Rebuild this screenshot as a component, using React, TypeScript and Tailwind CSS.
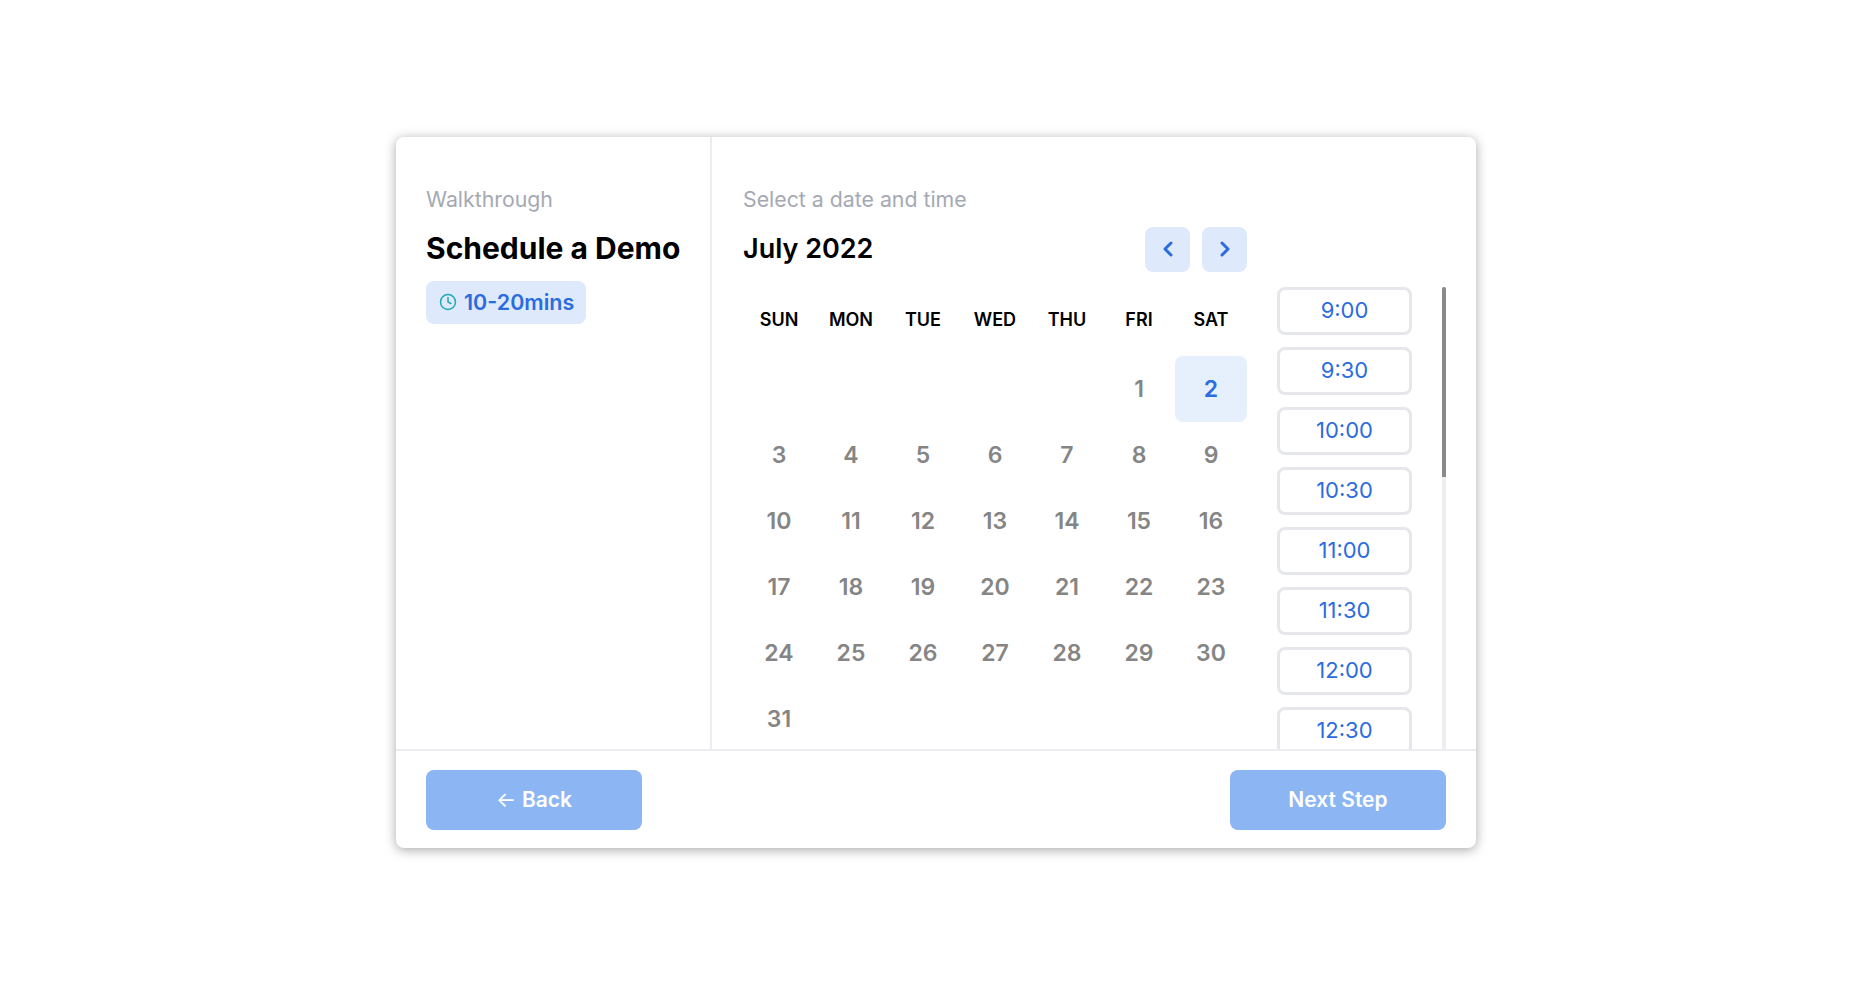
import React from 'react';
import { ChevronLeft, ChevronRight, Clock } from 'lucide-react';

const weekDays = ['SUN', 'MON', 'TUE', 'WED', 'THU', 'FRI', 'SAT'];
const leadingBlanks = 5;
const dayCount = 31;
const selectedDay = 2;

const times = [
    '9:00', '9:30', '10:00', '10:30', '11:00', '11:30', '12:00', '12:30', '13:00', '13:30',
    '14:00', '14:30', '15:00', '15:30', '16:00', '16:30', '17:00', '17:30', '18:00',
];

const App: React.FC = () => {
    const days = Array.from({ length: dayCount }, (_, i) => i + 1);

    return (
        <div className="min-h-screen flex items-center justify-center bg-white font-['Inter',sans-serif]">
            <div className="w-[1080px] h-[711px] flex flex-col bg-white rounded-lg shadow-[0_2px_12px_rgba(0,0,0,0.35)] overflow-hidden">
                <div className="flex-1 flex min-h-0">
                    <div className="w-[316px] shrink-0 border-r-2 border-[#ebedf0] pl-[30px] pt-[47px]">
                        <p className="text-[21.3px] leading-[30px] text-[#a5a9b4]">Walkthrough</p>
                        <h1 className="mt-[15px] text-[30px] leading-[38px] font-bold text-black">Schedule a Demo</h1>
                        <div className="mt-[14px] inline-flex items-center gap-[7px] h-[43px] pl-[13px] pr-[12px] rounded-lg bg-[#dee9fb]">
                            <Clock className="w-[18px] h-[18px] text-[#1fa8b8]" strokeWidth={2} />
                            <span className="text-[21.5px] font-semibold text-[#2b6cdf]">10-20mins</span>
                        </div>
                    </div>

                    <div className="flex-1 flex min-w-0 pl-[31px] pr-[30px] pt-[47px]">
                        <div className="w-[504px] shrink-0">
                            <p className="text-[21.3px] leading-[30px] text-[#a5a9b4]">Select a date and time</p>
                            <div className="mt-[13px] flex items-center justify-between h-[45px]">
                                <h2 className="text-[27px] font-semibold text-black">July 2022</h2>
                                <div className="flex gap-[12px]">
                                    <button className="w-[45px] h-[45px] flex items-center justify-center rounded-lg bg-[#dee9fb]">
                                        <ChevronLeft className="w-6 h-6 text-[#2b6cdf]" strokeWidth={3} />
                                    </button>
                                    <button className="w-[45px] h-[45px] flex items-center justify-center rounded-lg bg-[#dee9fb]">
                                        <ChevronRight className="w-6 h-6 text-[#2b6cdf]" strokeWidth={3} />
                                    </button>
                                </div>
                            </div>
                            <div className="mt-[24px] grid grid-cols-7">
                                {weekDays.map((d) => (
                                    <div key={d} className="h-[48px] flex items-center justify-center text-[18px] font-semibold text-black">
                                        {d}
                                    </div>
                                ))}
                            </div>
                            <div className="mt-[12px] grid grid-cols-7 auto-rows-[66px]">
                                {Array.from({ length: leadingBlanks }, (_, i) => (
                                    <div key={i} />
                                ))}
                                {days.map((d) => (
                                    <div
                                        key={d}
                                        className={
                                            d === selectedDay
                                                ? 'flex items-center justify-center pt-px rounded-lg bg-[#e6effc] text-[23px] font-semibold text-[#2b6cdf]'
                                                : 'flex items-center justify-center pt-px text-[23px] font-semibold text-[#858585]'
                                        }
                                    >
                                        {d}
                                    </div>
                                ))}
                            </div>
                        </div>

                        <div className="relative ml-[30px] mt-[103px] flex-1 min-h-0">
                            <div className="h-full flex flex-col gap-[12px] overflow-y-auto [scrollbar-width:none]">
                                {times.map((t) => (
                                    <button
                                        key={t}
                                        className="w-[135px] h-[48px] shrink-0 flex items-center justify-center rounded-lg border-[3px] border-[#e5e7eb] bg-white text-[22px] text-[#2b6cdf]"
                                    >
                                        {t}
                                    </button>
                                ))}
                            </div>
                            <div className="absolute top-0 bottom-0 right-0 w-1 bg-[#eeeeee]" />
                            <div className="absolute top-0 right-0 w-1 h-[190px] rounded-t-sm bg-[#8a8a8a]" />
                        </div>
                    </div>
                </div>

                <div className="h-[99px] shrink-0 border-t-2 border-[#ebedf0] flex items-start justify-between px-[30px] pt-[19px]">
                    <button className="w-[216px] h-[60px] flex items-center justify-center gap-[6px] rounded-lg bg-[#8bb6f3] text-[21px] font-semibold text-white">
                        <span className="font-normal">←</span>
                        <span>Back</span>
                    </button>
                    <button className="w-[216px] h-[60px] flex items-center justify-center rounded-lg bg-[#8bb6f3] text-[21px] font-semibold text-white">
                        Next Step
                    </button>
                </div>
            </div>
        </div>
    );
};

export default App;
